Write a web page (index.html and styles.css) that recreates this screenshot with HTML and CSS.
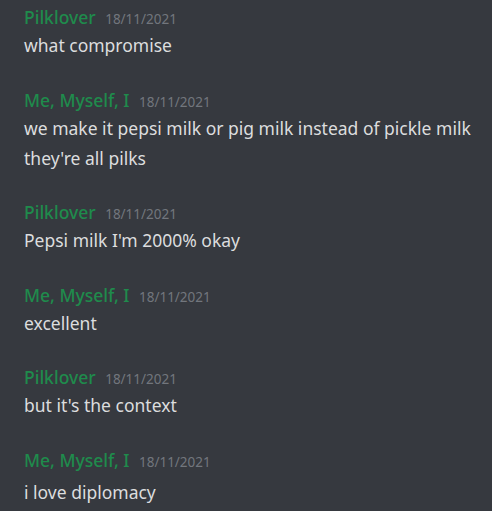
FILE: index.html
```html
<!DOCTYPE html>
<html>
<head>
<meta charset="utf-8">
<link rel="stylesheet" href="styles.css">
</head>
<body>
<div class="chat">
  <div class="group">
    <div class="header"><span class="name">Pilklover</span><span class="time">18/11/2021</span></div>
    <div class="msg">what compromise</div>
  </div>
  <div class="group">
    <div class="header"><span class="name">Me, Myself, I</span><span class="time">18/11/2021</span></div>
    <div class="msg">we make it pepsi milk or pig milk instead of pickle milk</div>
    <div class="msg">they're all pilks</div>
  </div>
  <div class="group">
    <div class="header"><span class="name">Pilklover</span><span class="time">18/11/2021</span></div>
    <div class="msg">Pepsi milk I'm 2000% okay</div>
  </div>
  <div class="group">
    <div class="header"><span class="name">Me, Myself, I</span><span class="time">18/11/2021</span></div>
    <div class="msg">excellent</div>
  </div>
  <div class="group">
    <div class="header"><span class="name">Pilklover</span><span class="time">18/11/2021</span></div>
    <div class="msg">but it's the context</div>
  </div>
  <div class="group">
    <div class="header"><span class="name">Me, Myself, I</span><span class="time">18/11/2021</span></div>
    <div class="msg msg-spaced">i love diplomacy</div>
  </div>
</div>
</body>
</html>
```
FILE: styles.css
```css
html, body {
  margin: 0;
  padding: 0;
  background: #36393f;
}
body {
  font-family: "Noto Sans", "Open Sans", sans-serif;
  color: #dcddde;
  width: 492px;
  height: 511px;
  overflow: hidden;
}
.chat {
  padding: 4px 0 0 24px;
}
.group + .group {
  margin-top: 26.5px;
}
.header {
  display: flex;
  align-items: baseline;
  line-height: 26px;
  height: 26px;
}
.name {
  font-size: 17.5px;
  font-weight: 500;
  color: #1f8b4c;
}
.time {
  font-size: 13.5px;
  color: #72767d;
  margin-left: 9.5px;
}
.msg {
  font-size: 17.5px;
  line-height: 30px;
  white-space: nowrap;
}
.msg-spaced {
  padding-top: 4px;
}
```
